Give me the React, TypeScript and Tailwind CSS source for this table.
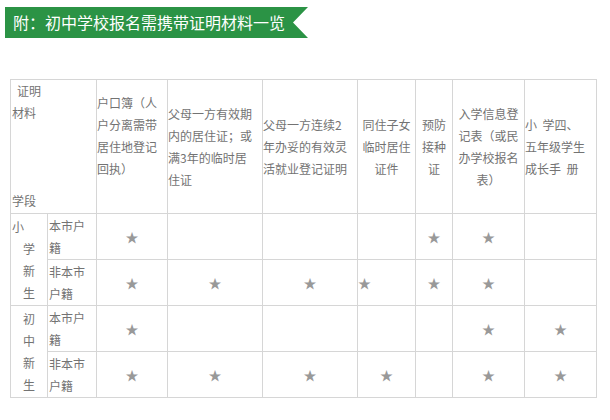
const S = "★";

type Cell = { s?: boolean; left?: boolean };

const rows: { group?: string[]; label: string[]; cells: Cell[] }[] = [
  {
    group: ["小", "学", "新", "生"],
    label: ["本市户", "籍"],
    cells: [{ s: true }, {}, {}, {}, { s: true }, { s: true }, {}],
  },
  {
    label: ["非本市", "户籍"],
    cells: [{ s: true }, { s: true }, { s: true }, { s: true, left: true }, { s: true }, { s: true }, {}],
  },
  {
    group: ["初", "中", "新", "生"],
    label: ["本市户", "籍"],
    cells: [{ s: true }, {}, {}, {}, {}, { s: true }, { s: true }],
  },
  {
    label: ["非本市", "户籍"],
    cells: [{ s: true }, { s: true }, { s: true }, { s: true }, {}, { s: true }, { s: true }],
  },
];

function Lines({ lines }: { lines: string[] }) {
  return (
    <>
      {lines.map((l, i) => (
        <div key={i} className="whitespace-pre">
          {l || "\u00a0"}
        </div>
      ))}
    </>
  );
}

const td = "border border-[#d6d6d6] p-0 align-middle";

export default function App() {
  return (
    <div
      className="w-[610px] h-[420px] bg-white text-[12px] leading-[22px] text-[#737373]"
      style={{ fontFamily: '"Noto Sans CJK SC", "Noto Sans", sans-serif' }}
    >
      <div className="pt-[7px] pl-[5px]">
        <div className="w-[303px] h-[31px] bg-[#2b9345] text-white text-[16px] leading-[31px] pl-[8px] [clip-path:polygon(0_0,100%_0,calc(100%-15px)_50%,100%_100%,0_100%)]">
          附：初中学校报名需携带证明材料一览
        </div>
      </div>

      <table className="mt-[41px] ml-[10px] table-fixed border-collapse border border-[#d6d6d6]">
        <colgroup>
          <col className="w-[37px]" />
          <col className="w-[49px]" />
          <col className="w-[71px]" />
          <col className="w-[95px]" />
          <col className="w-[95px]" />
          <col className="w-[58px]" />
          <col className="w-[37px]" />
          <col className="w-[72px]" />
          <col className="w-[72px]" />
        </colgroup>
        <tbody>
          <tr className="h-[134px]">
            <td colSpan={2} className={`${td} align-top pl-px`}>
              <div className="pl-[5px]">证明</div>
              <div>材料</div>
              <div>&nbsp;</div>
              <div>&nbsp;</div>
              <div>&nbsp;</div>
              <div>学段</div>
            </td>
            <td className={td}>
              <Lines lines={["户口簿（人", "户分离需带", "居住地登记", "回执）", ""]} />
            </td>
            <td className={td}>
              <Lines lines={["父母一方有效期", "内的居住证；或", "满3年的临时居", "住证"]} />
            </td>
            <td className={td}>
              <Lines lines={["父母一方连续2", "年办妥的有效灵", "活就业登记证明"]} />
            </td>
            <td className={`${td} text-center`}>
              <Lines lines={["同住子女", "临时居住", "证件"]} />
            </td>
            <td className={`${td} text-center`}>
              <Lines lines={["预防", "接种", "证"]} />
            </td>
            <td className={`${td} text-center`}>
              <Lines lines={["入学信息登", "记表（或民", "办学校报名", "表）"]} />
            </td>
            <td className={td}>
              <Lines lines={["小  学四、", "五年级学生", "成长手  册"]} />
            </td>
          </tr>
          {rows.map((r, i) => (
            <tr key={i} className="h-[46px]">
              {r.group && (
                <td rowSpan={2} className={`${td} pl-px`}>
                  {r.group.map((g, j) => (
                    <div key={j} className={j === 0 && i === 0 ? "" : "pl-[11px]"}>
                      {g}
                    </div>
                  ))}
                </td>
              )}
              <td className={`${td} pl-px`}>
                <Lines lines={r.label} />
              </td>
              {r.cells.map((c, j) => (
                <td
                  key={j}
                  className={`${td} text-[#999] text-[13px] ${c.left ? "text-left" : "text-center"}`}
                >
                  {c.s ? S : ""}
                </td>
              ))}
            </tr>
          ))}
        </tbody>
      </table>
    </div>
  );
}
